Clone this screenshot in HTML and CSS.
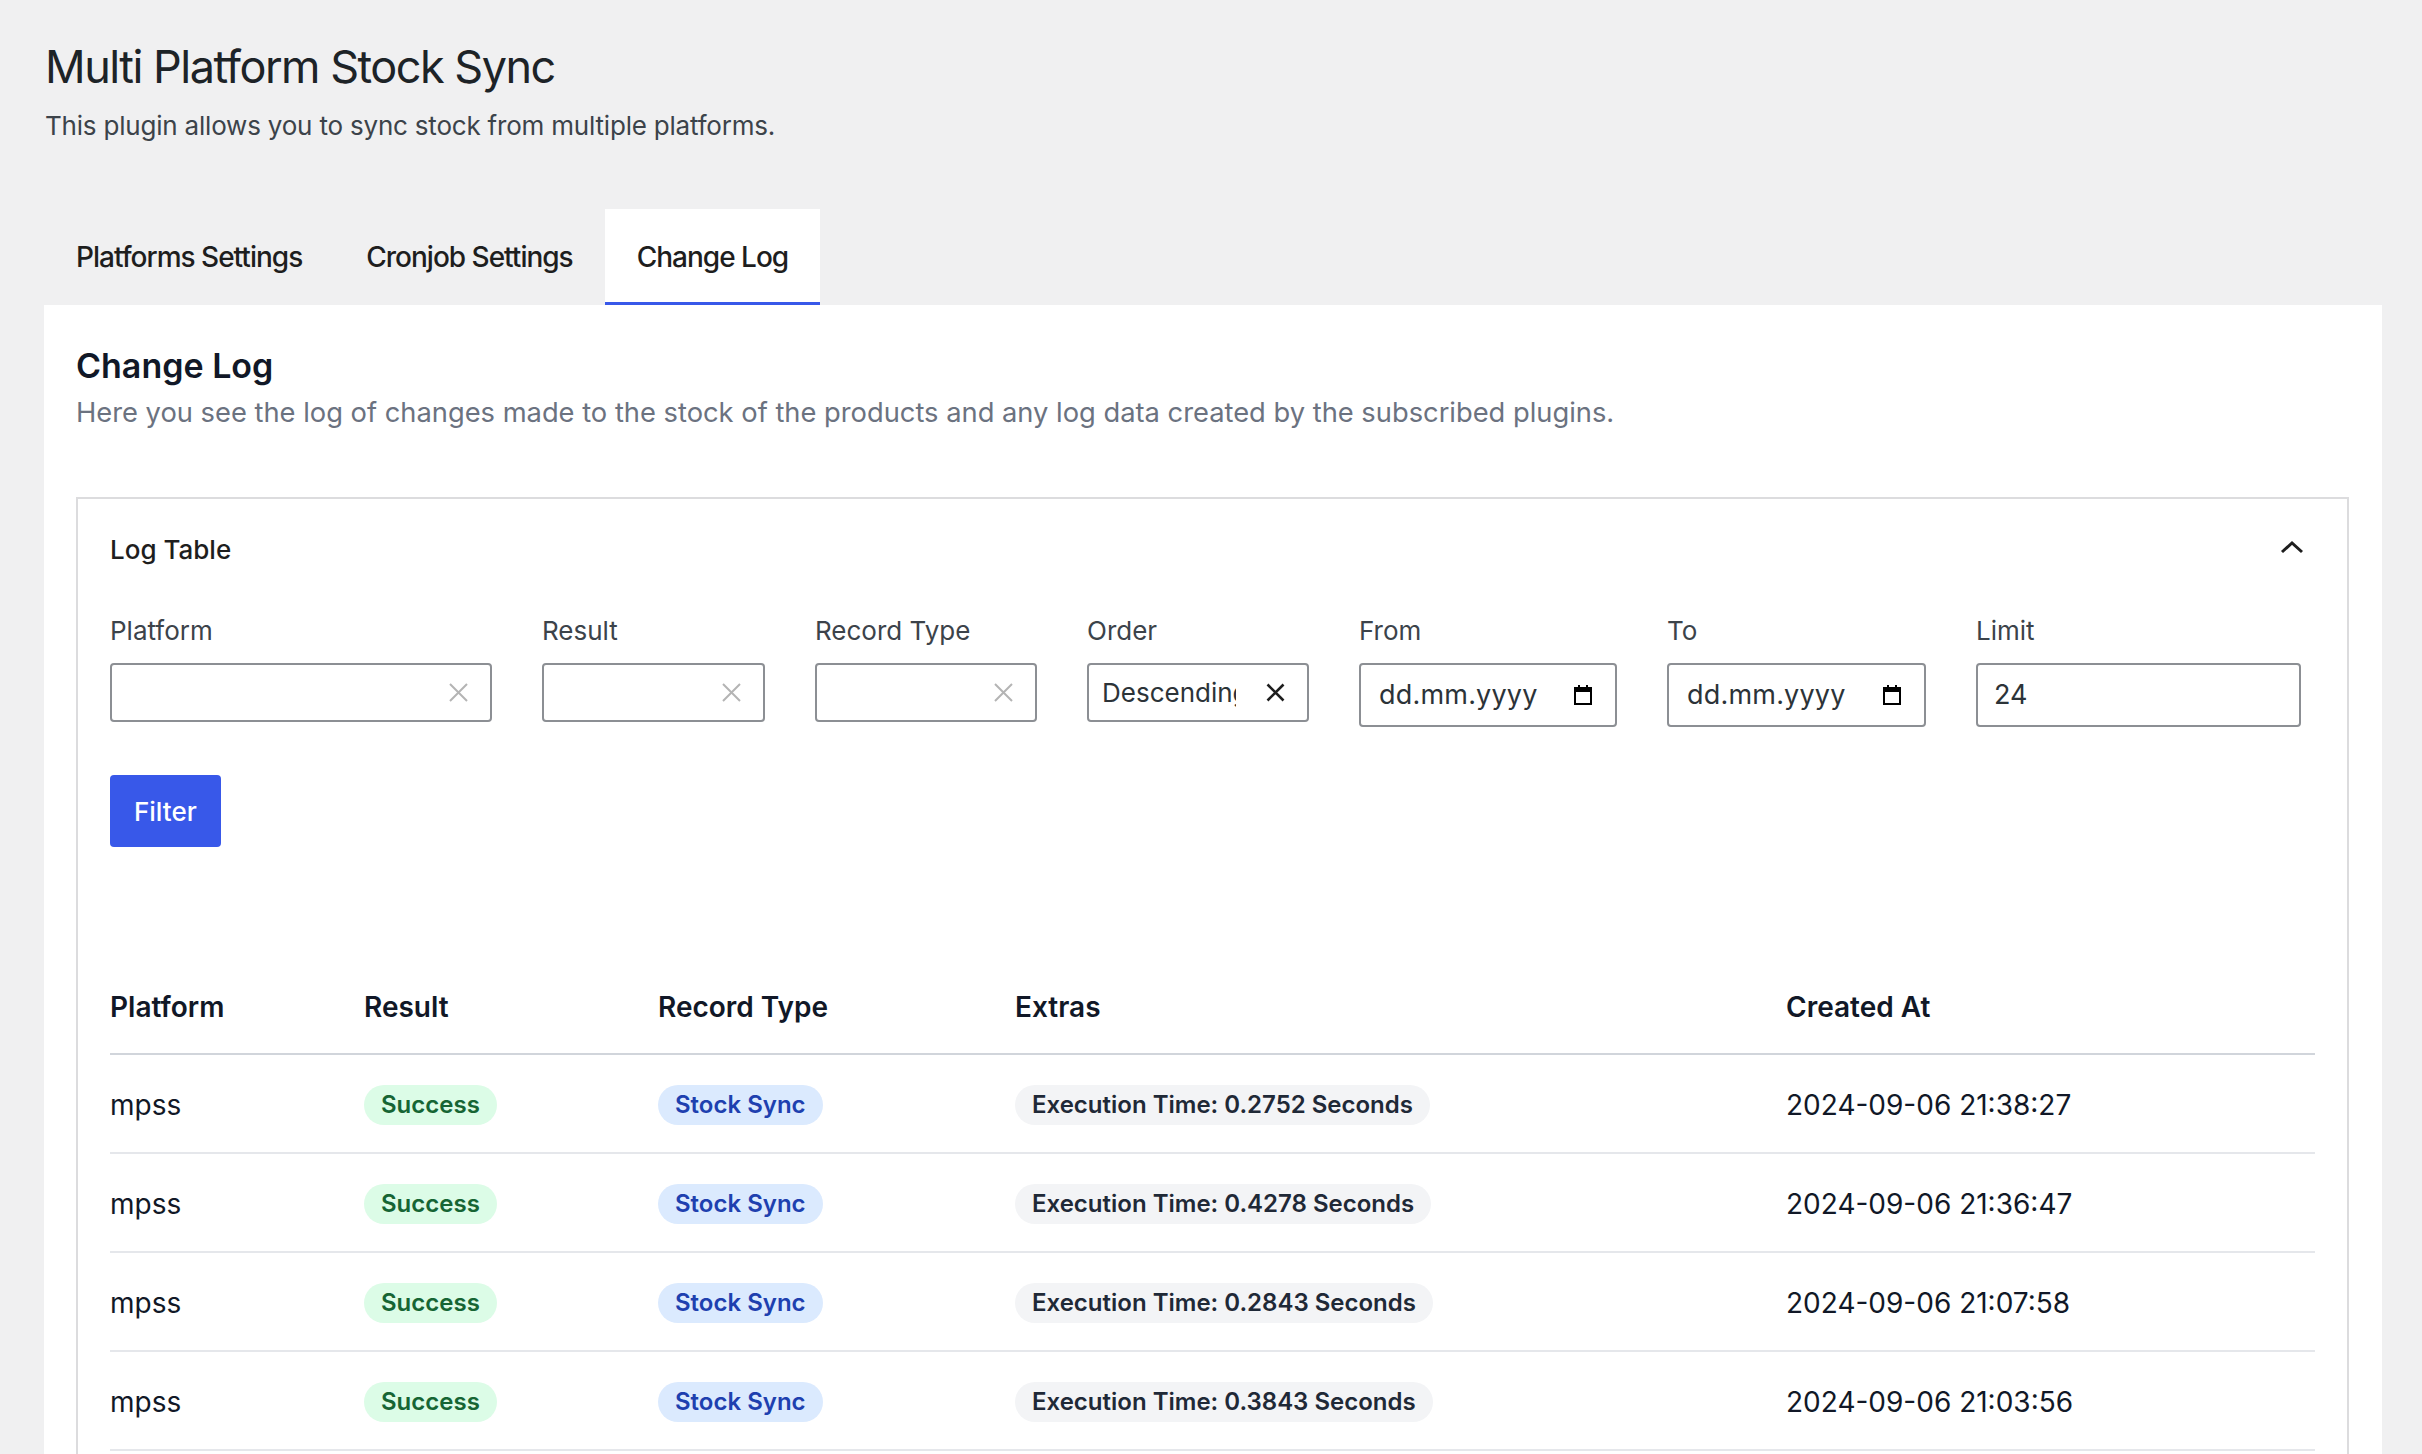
FILE: index.html
```html
<!DOCTYPE html>
<html lang="en">
<head>
<meta charset="utf-8">
<title>Multi Platform Stock Sync</title>
<link rel="stylesheet" href="styles.css">
</head>
<body>
<div class="wrap">
  <h1 class="title">Multi Platform Stock Sync</h1>
  <p class="subtitle">This plugin allows you to sync stock from multiple platforms.</p>

  <nav class="tabs">
    <a class="tab">Platforms Settings</a>
    <a class="tab">Cronjob Settings</a>
    <a class="tab active">Change Log</a>
  </nav>

  <section class="panel">
    <h2 class="panel-title">Change Log</h2>
    <p class="desc">Here you see the log of changes made to the stock of the products and any log data created by the subscribed plugins.</p>

    <div class="card">
      <div class="card-head">
        <span class="card-title">Log Table</span>
        <svg class="chevron" width="24" height="14" viewBox="0 0 24 14"><polyline points="2,12 12,3 22,12" fill="none" stroke="#1e1e1e" stroke-width="3"/></svg>
      </div>

      <div class="filters">
        <div class="field">
          <label class="label">Platform</label>
          <div class="select">
            <span class="select-value"></span>
            <svg class="clear" width="19" height="19" viewBox="0 0 19 19"><path d="M1 1L18 18M18 1L1 18" stroke="#b4b4b4" stroke-width="2"/></svg>
          </div>
        </div>
        <div class="field">
          <label class="label">Result</label>
          <div class="select">
            <span class="select-value"></span>
            <svg class="clear" width="19" height="19" viewBox="0 0 19 19"><path d="M1 1L18 18M18 1L1 18" stroke="#b4b4b4" stroke-width="2"/></svg>
          </div>
        </div>
        <div class="field">
          <label class="label">Record Type</label>
          <div class="select">
            <span class="select-value"></span>
            <svg class="clear" width="19" height="19" viewBox="0 0 19 19"><path d="M1 1L18 18M18 1L1 18" stroke="#b4b4b4" stroke-width="2"/></svg>
          </div>
        </div>
        <div class="field">
          <label class="label">Order</label>
          <div class="select">
            <span class="select-value">Descending</span>
            <svg class="clear" width="19" height="19" viewBox="0 0 19 19"><path d="M1.5 1.5L17.5 17.5M17.5 1.5L1.5 17.5" stroke="#1e1e1e" stroke-width="2.6"/></svg>
          </div>
        </div>
        <div class="field">
          <label class="label">From</label>
          <div class="input date">
            <span class="date-text">dd.mm.yyyy</span>
            <svg class="cal" width="18" height="20" viewBox="0 0 18 20"><rect x="1" y="3" width="16" height="16" fill="none" stroke="#000" stroke-width="2"/><rect x="1" y="3" width="16" height="4" fill="#000"/><rect x="4" y="0" width="2" height="4" fill="#000"/><rect x="12" y="0" width="2" height="4" fill="#000"/></svg>
          </div>
        </div>
        <div class="field">
          <label class="label">To</label>
          <div class="input date">
            <span class="date-text">dd.mm.yyyy</span>
            <svg class="cal" width="18" height="20" viewBox="0 0 18 20"><rect x="1" y="3" width="16" height="16" fill="none" stroke="#000" stroke-width="2"/><rect x="1" y="3" width="16" height="4" fill="#000"/><rect x="4" y="0" width="2" height="4" fill="#000"/><rect x="12" y="0" width="2" height="4" fill="#000"/></svg>
          </div>
        </div>
        <div class="field">
          <label class="label">Limit</label>
          <div class="input">
            <span class="input-text">24</span>
          </div>
        </div>
      </div>

      <button class="btn">Filter</button>

      <table class="log">
        <colgroup>
          <col class="c-platform">
          <col class="c-result">
          <col class="c-type">
          <col class="c-extras">
          <col class="c-created">
        </colgroup>
        <thead>
          <tr>
            <th>Platform</th>
            <th>Result</th>
            <th>Record Type</th>
            <th>Extras</th>
            <th>Created At</th>
          </tr>
        </thead>
        <tbody>
          <tr>
            <td>mpss</td>
            <td><span class="badge green">Success</span></td>
            <td><span class="badge blue">Stock Sync</span></td>
            <td><span class="badge gray">Execution Time: 0.2752 Seconds</span></td>
            <td>2024-09-06 21:38:27</td>
          </tr>
          <tr>
            <td>mpss</td>
            <td><span class="badge green">Success</span></td>
            <td><span class="badge blue">Stock Sync</span></td>
            <td><span class="badge gray">Execution Time: 0.4278 Seconds</span></td>
            <td>2024-09-06 21:36:47</td>
          </tr>
          <tr>
            <td>mpss</td>
            <td><span class="badge green">Success</span></td>
            <td><span class="badge blue">Stock Sync</span></td>
            <td><span class="badge gray">Execution Time: 0.2843 Seconds</span></td>
            <td>2024-09-06 21:07:58</td>
          </tr>
          <tr>
            <td>mpss</td>
            <td><span class="badge green">Success</span></td>
            <td><span class="badge blue">Stock Sync</span></td>
            <td><span class="badge gray">Execution Time: 0.3843 Seconds</span></td>
            <td>2024-09-06 21:03:56</td>
          </tr>
        </tbody>
      </table>
    </div>
  </section>
</div>
</body>
</html>
```

FILE: styles.css
```css
html, body {
  margin: 0;
  padding: 0;
}

body {
  background: #f0f0f1;
  font-family: "Inter", "Noto Sans", sans-serif;
  color: #1d2327;
  height: 1454px;
  overflow: hidden;
}

.wrap {
  padding: 36px 40px 0 44px;
}

.title {
  margin: 0;
  font-size: 45px;
  line-height: 62px;
  font-weight: 400;
  letter-spacing: -1.5px;
  color: #1d2327;
  padding-left: 1px;
}

.subtitle {
  margin: 8px 0 0;
  font-size: 26px;
  line-height: 39px;
  letter-spacing: -0.2px;
  color: #3c434a;
  padding-left: 1px;
}

.tabs {
  display: flex;
  margin-top: 64px;
}

.tab {
  display: block;
  padding: 28px 32px 25px;
  font-size: 28px;
  line-height: 40px;
  font-weight: 500;
  letter-spacing: -1px;
  color: #1e1e1e;
  border-bottom: 3px solid transparent;
}

.tab.active {
  background: #fff;
  border-bottom-color: #3858e9;
}

.panel {
  background: #fff;
  padding: 39px 33px 40px 32px;
}

.panel-title {
  margin: 0;
  font-size: 34px;
  line-height: 44px;
  font-weight: 600;
  color: #111827;
}

.desc {
  margin: 5px 0 0;
  font-size: 27.3px;
  line-height: 39px;
  color: #6b7280;
}

.card {
  margin-top: 65px;
  border: 2px solid #dcdcde;
  padding: 33px 32px;
}

.card-head {
  display: flex;
  justify-content: space-between;
  align-items: center;
}

.card-title {
  font-size: 26px;
  line-height: 36px;
  font-weight: 500;
  color: #1e1e1e;
}

.chevron {
  margin-right: 11px;
  margin-top: -6px;
}

.filters {
  display: grid;
  grid-template-columns: 382px 223px 222px 222px 258px 259px 325px;
  column-gap: 50px;
  margin-top: 45px;
  align-items: start;
}

.field {
  display: flex;
  flex-direction: column;
}

.label {
  font-size: 26px;
  line-height: 36px;
  color: #3c434a;
  margin-bottom: 14px;
}

.select,
.input {
  box-sizing: border-box;
  display: flex;
  align-items: center;
  border: 2px solid #8c8f94;
  border-radius: 4px;
  background: #fff;
}

.select {
  height: 59px;
  padding: 0 22px 0 13px;
}

.select-value {
  flex: 1;
  min-width: 0;
  overflow: hidden;
  white-space: nowrap;
  margin-right: 30px;
  font-size: 26px;
  line-height: 36px;
  color: #2c3338;
}

.clear {
  flex: none;
}

.input {
  height: 64px;
  padding: 0 16px;
}

.input-text {
  font-size: 27px;
  line-height: 36px;
  color: #2c3338;
}

.date {
  padding: 0 23px 0 18px;
  justify-content: space-between;
}

.date-text {
  font-size: 27px;
  line-height: 36px;
  letter-spacing: 0.2px;
  color: #2c3338;
}

.cal {
  flex: none;
}

.btn {
  display: block;
  margin-top: 48px;
  height: 72px;
  padding: 0 24px;
  border: 0;
  border-radius: 4px;
  background: #3858e9;
  color: #fff;
  font-family: "Inter", "Noto Sans", sans-serif;
  font-size: 26px;
  font-weight: 500;
}

.log {
  margin-top: 115px;
  width: 100%;
  border-collapse: collapse;
  table-layout: fixed;
}

.c-platform { width: 254px; }
.c-result { width: 294px; }
.c-type { width: 357px; }
.c-extras { width: 771px; }

.log th {
  text-align: left;
  padding: 25px 0 26px;
  font-size: 28px;
  line-height: 40px;
  font-weight: 600;
  color: #111827;
  border-bottom: 2px solid #d1d5db;
}

.log td {
  padding: 30px 0 27px;
  font-size: 28px;
  line-height: 40px;
  color: #111827;
  border-bottom: 2px solid #e5e7eb;
  white-space: nowrap;
}

.badge {
  display: inline-block;
  height: 40px;
  line-height: 40px;
  padding: 0 17px;
  border-radius: 20px;
  font-size: 24px;
  font-weight: 600;
  vertical-align: top;
}

.badge.green {
  background: #dcfce7;
  color: #166534;
}

.badge.blue {
  background: #dbeafe;
  color: #1e40af;
}

.badge.gray {
  background: #f3f4f6;
  color: #1f2937;
}
```
